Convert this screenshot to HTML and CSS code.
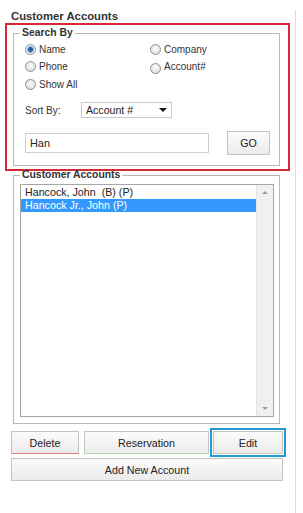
FILE: index.html
```html
<!DOCTYPE html>
<html lang="en">
<head>
  <meta charset="UTF-8">
  <meta name="viewport" content="width=device-width, initial-scale=1.0">
  <title>Customer Accounts</title>
  <link rel="stylesheet" href="styles.css">
</head>
<body>
  <div class="page">
    <div class="title">Customer Accounts</div>

    <div class="search-panel">
      <fieldset class="group search-group">
        <legend>Search By</legend>
        <div class="radio-grid">
          <label class="radio checked"><span class="dot"></span>Name</label>
          <label class="radio"><span class="dot"></span>Company</label>
          <label class="radio"><span class="dot"></span>Phone</label>
          <label class="radio account"><span class="dot"></span>Account#</label>
          <label class="radio"><span class="dot"></span>Show All</label>
        </div>
        <div class="sort-row">
          <span class="sort-label">Sort By:</span>
          <div class="select">Account #<span class="caret"></span></div>
        </div>
        <div class="query-row">
          <div class="text-input">Han</div>
          <button class="btn go">GO</button>
        </div>
      </fieldset>
    </div>

    <fieldset class="group list-group">
      <legend>Customer Accounts</legend>
      <div class="listbox">
        <div class="items">
          <div class="item">Hancock, John&nbsp; (B) (P)</div>
          <div class="item selected">Hancock Jr., John (P)</div>
        </div>
        <div class="scrollbar">
          <span class="arrow up"></span>
          <span class="arrow down"></span>
        </div>
      </div>
    </fieldset>

    <div class="actions">
      <button class="btn delete">Delete</button>
      <button class="btn reservation">Reservation</button>
      <div class="edit-wrap"><button class="btn edit">Edit</button></div>
    </div>
    <button class="btn add-btn">Add New Account</button>
  </div>
</body>
</html>
```

FILE: styles.css
```css
body {
  margin: 0;
  font-family: "Liberation Sans", Arial, sans-serif;
  color: #222;
  background-color: #fff;
}
.page {
  width: 295px;
  height: 503px;
  margin-top: 10px;
  border-right: 1px solid #dcdcdc;
}
.title {
  font-weight: bold;
  font-size: 11.3px;
  line-height: 13px;
  padding-left: 11px;
  color: #333;
}
.search-panel {
  width: 285px;
  box-sizing: border-box;
  margin-left: 5px;
  border: 2px solid #d52a33;
  padding: 1px 8px 3px 6px;
}
.group {
  margin: 0;
  min-width: 0;
  box-sizing: border-box;
  border: 1px solid #b8b8b8;
}
legend {
  padding: 0 2px;
  font-weight: bold;
  font-size: 10.4px;
  color: #333;
}
.search-group {
  padding: 1px 9px 10px 11px;
}
.search-group legend {
  margin-left: -5px;
  line-height: 14px;
}
.radio-grid {
  display: grid;
  grid-template-columns: 125px 1fr;
  grid-template-rows: 17px 17px 19px;
  align-items: center;
}
.radio {
  display: flex;
  align-items: center;
  gap: 3px;
  font-size: 10px;
  color: #333;
}
.dot {
  width: 11px;
  height: 11px;
  box-sizing: border-box;
  border-radius: 50%;
  border: 1px solid #8f8f8f;
  background: radial-gradient(circle at 50% 40%, #fdfdfd, #d4d4d4);
}
.account .dot {
  margin-top: 3px;
}
.checked .dot {
  background: radial-gradient(circle, #1b5797 0, #2a6db3 2px, #7ea7d2 3px, #efefef 3.6px);
}
.sort-row {
  display: flex;
  align-items: center;
  height: 16px;
  margin-top: 8px;
}
.sort-label {
  width: 56px;
  font-size: 10px;
  color: #333;
}
.select {
  width: 91px;
  height: 16px;
  box-sizing: border-box;
  border: 1px solid #cbcbcb;
  padding: 0 4px 0 4px;
  display: flex;
  align-items: center;
  justify-content: space-between;
  font-size: 10.6px;
}
.caret {
  width: 0;
  height: 0;
  border-left: 4px solid transparent;
  border-right: 4px solid transparent;
  border-top: 4px solid #111;
}
.query-row {
  display: flex;
  align-items: center;
  justify-content: space-between;
  height: 24px;
  margin-top: 13px;
}
.text-input {
  width: 184px;
  height: 20px;
  box-sizing: border-box;
  border: 1px solid #d0d0d0;
  padding-left: 4px;
  display: flex;
  align-items: center;
  font-size: 10.9px;
}
.btn {
  font-family: inherit;
  font-size: 10.7px;
  color: #222;
  padding: 0;
  border: 1px solid #c4c4c4;
  border-radius: 0;
  box-sizing: border-box;
  background: linear-gradient(#fbfbfb, #ebebeb);
}
.go {
  width: 43px;
  height: 24px;
}
.list-group {
  width: 267px;
  margin: -2px 0 0 13px;
  padding: 3px 5px 6px 6px;
}
.list-group legend {
  line-height: 12px;
}
.listbox {
  display: flex;
  height: 233px;
  box-sizing: border-box;
  border: 1px solid #a5a5a5;
}
.items {
  flex: 1;
  padding-top: 1px;
  font-size: 10.7px;
}
.item {
  height: 13px;
  line-height: 13px;
  padding-left: 4px;
  white-space: nowrap;
}
.item.selected {
  background-color: #3399ff;
  color: #fff;
}
.scrollbar {
  width: 17px;
  box-sizing: border-box;
  background-color: #f0f0f0;
  border-left: 1px solid #e4e4e4;
  padding: 6px 0;
  display: flex;
  flex-direction: column;
  justify-content: space-between;
  align-items: center;
}
.arrow {
  width: 0;
  height: 0;
  border-left: 3px solid transparent;
  border-right: 3px solid transparent;
}
.arrow.up {
  border-bottom: 3px solid #9d9d9d;
}
.arrow.down {
  border-top: 3px solid #9d9d9d;
}
.actions {
  display: flex;
  align-items: center;
  height: 29px;
  margin: 4px 0 0 11px;
}
.delete {
  width: 68px;
  height: 23px;
  border-bottom-color: #e38080;
}
.reservation {
  width: 125px;
  height: 23px;
  margin-left: 5px;
  border-bottom-color: #afd9aa;
}
.edit-wrap {
  margin-left: 1px;
  border: 2px solid #1e9bd7;
  padding: 1px;
}
.edit {
  display: block;
  width: 70px;
  height: 23px;
}
.add-btn {
  display: block;
  width: 272px;
  height: 23px;
  margin: 1px 0 0 11px;
}
```
